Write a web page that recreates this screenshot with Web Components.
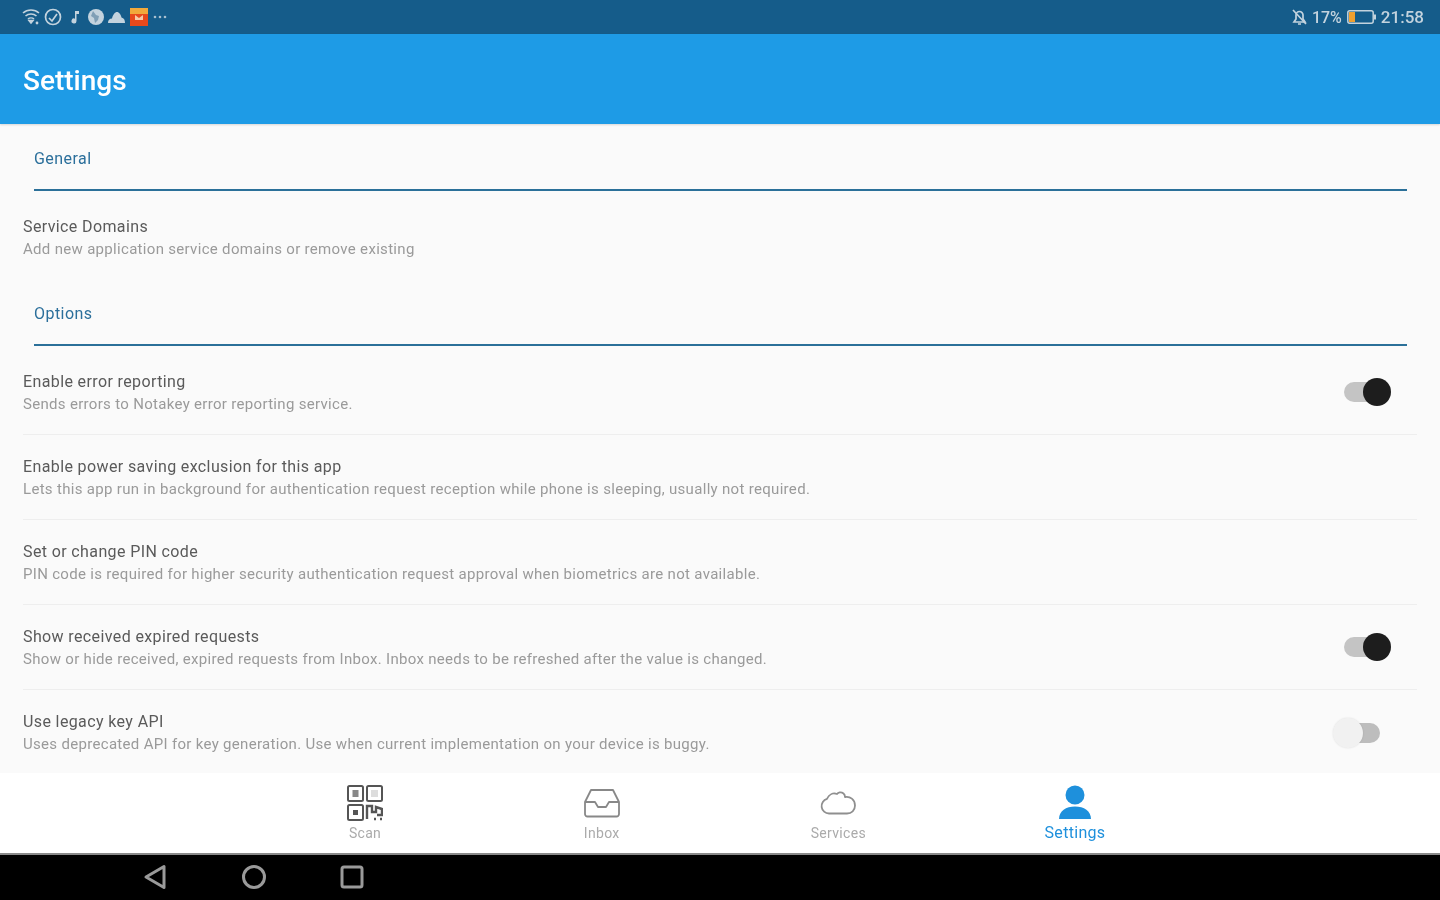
<!DOCTYPE html>
<html lang="en">
<head>
<meta charset="utf-8">
<title>Settings</title>
<style>
  html, body { margin: 0; height: 100%; overflow: hidden; }
  body { font-family: Roboto, "Liberation Sans", sans-serif; background: #fafafa; }
  settings-page { height: 100vh; }
</style>
</head>
<body>
<settings-page>
  <settings-section heading="General">
    <settings-row plain>
      <span slot="title">Service Domains</span>
      <span slot="subtitle">Add new application service domains or remove existing</span>
    </settings-row>
  </settings-section>
  <settings-section heading="Options">
    <settings-row>
      <span slot="title">Enable error reporting</span>
      <span slot="subtitle">Sends errors to Notakey error reporting service.</span>
      <toggle-switch checked></toggle-switch>
    </settings-row>
    <settings-row>
      <span slot="title">Enable power saving exclusion for this app</span>
      <span slot="subtitle">Lets this app run in background for authentication request reception while phone is sleeping, usually not required.</span>
    </settings-row>
    <settings-row>
      <span slot="title">Set or change PIN code</span>
      <span slot="subtitle">PIN code is required for higher security authentication request approval when biometrics are not available.</span>
    </settings-row>
    <settings-row>
      <span slot="title">Show received expired requests</span>
      <span slot="subtitle">Show or hide received, expired requests from Inbox. Inbox needs to be refreshed after the value is changed.</span>
      <toggle-switch checked></toggle-switch>
    </settings-row>
    <settings-row>
      <span slot="title">Use legacy key API</span>
      <span slot="subtitle">Uses deprecated API for key generation. Use when current implementation on your device is buggy.</span>
      <toggle-switch></toggle-switch>
    </settings-row>
  </settings-section>
</settings-page>

<script>
// Small helper so every component below is just a class with a template string
function defineComponent(name, html, extra = {}) {
  const template = document.createElement('template');
  template.innerHTML = html;
  class Component extends HTMLElement {
    connectedCallback() {
      if (this.shadowRoot) return;
      const root = this.attachShadow({ mode: 'open' });
      root.appendChild(template.content.cloneNode(true));
      if (extra.setup) extra.setup(this, root);
    }
  }
  customElements.define(name, Component);
}

/* Top status bar */
defineComponent('status-bar', `
  <style>
    :host { display: flex; height: 34px; flex: none; align-items: center; justify-content: space-between;
      background: #155c8a; padding: 0 16px 0 22px; color: #c3d3de; font-size: 16px; font-weight: 500; filter: blur(.6px); }
    .group { display: flex; align-items: center; }
    svg { display: block; }
    .left { gap: 4px; }
    .right { gap: 5px; }
  </style>
  <div class="group left">
    <svg width="18" height="18" viewBox="0 0 18 18" fill="none" stroke="#c3d3de" stroke-width="1.6">
      <path d="M1 5c4.500-4 11.500-4 16 0M3.500 8c3-2.700 8-2.700 11 0M6 11c1.600-1.400 4.400-1.400 6 0"/>
      <path d="M9 15l-2-2.500h4z" fill="#c3d3de"/><circle cx="15" cy="15" r="1.400" fill="#c3d3de" stroke="none"/>
    </svg>
    <svg width="18" height="18" viewBox="0 0 18 18" fill="none" stroke="#c3d3de" stroke-width="1.700">
      <circle cx="9" cy="9" r="7.500"/><path d="M5 10l3 3 5-7"/>
    </svg>
    <svg width="10" height="14" viewBox="0 0 10 14" fill="#c3d3de" style="margin:0 2px 0 4px">
      <path d="M5 1h4v3H6.500v7a2.500 2.500 0 1 1-1.500-2.300z"/>
    </svg>
    <svg width="16" height="16" viewBox="0 0 16 16" style="margin-left:2px">
      <circle cx="8" cy="8" r="8" fill="#c3d3de"/><path d="M5 2l3 4 3 1-1 4-3 3-1-5-3-2z" fill="#7f9fb6"/>
    </svg>
    <svg width="17" height="11" viewBox="0 0 17 11" fill="#c3d3de"><path d="M0 11c0-3 1.500-4.500 4-4.500C5 2.500 7 0 9 0s4 2.500 4.500 5.500C16 6 17 8 17 11z"/></svg>
    <svg width="18" height="18" viewBox="0 0 18 18" style="margin-left:1px">
      <rect width="18" height="18" fill="#e8491c"/><rect width="18" height="6" fill="#f2a93b"/>
      <path d="M5 7l4 3 4-3v5H5z" fill="#f7c9a8"/>
    </svg>
    <svg width="14" height="4" viewBox="0 0 14 4" fill="#a9c0cf" style="margin-left:1px">
      <circle cx="2" cy="2" r="1.300"/><circle cx="7" cy="2" r="1.300"/><circle cx="12" cy="2" r="1.300"/>
    </svg>
  </div>
  <div class="group right">
    <svg width="15" height="16" viewBox="0 0 15 16" fill="none" stroke="#c3d3de" stroke-width="1.700">
      <path d="M2 13h11l-2-3V6a3.500 3.500 0 0 0-7 0v4z"/><path d="M1 1l13 14M6 15h3"/>
    </svg>
    <span>17%</span>
    <svg width="30" height="14" viewBox="0 0 30 14">
      <rect x=".8" y=".8" width="25.400" height="12.400" rx="2" fill="none" stroke="#c3d3de" stroke-width="1.500"/>
      <rect x="2" y="2" width="6" height="10" fill="#f0a030"/><rect x="27" y="4.500" width="2" height="5" fill="#c3d3de"/>
    </svg>
    <span style="font-size:17px;margin-left:-1px">21:58</span>
  </div>
`);

/* Blue title bar */
defineComponent('app-bar', `
  <style>
    :host { display: flex; height: 90px; flex: none; align-items: center; box-sizing: border-box;
      padding: 3px 0 0 23px; background: #1e9be6; color: #fff; font-size: 28px; font-weight: 500;
      box-shadow: 0 1px 2px rgba(0,0,0,.15); position: relative; z-index: 1; }
    span { filter: blur(.6px); }
  </style>
  <span><slot></slot></span>
`);

/* Group heading with the rule below, rows are slotted */
defineComponent('settings-section', `
  <style>
    :host { display: block; }
    .head { height: 65px; margin: 0 33px 0 34px; border-bottom: 2px solid #2b7099; box-sizing: content-box;
      padding-top: 0; color: #2b6f9b; font-size: 16px; letter-spacing: .45px; line-height: 68px; }
    .head span { filter: blur(.6px); display: inline-block; line-height: 20px; vertical-align: middle; }
    .rows { padding-top: 4px; }
  </style>
  <div class="head"><span id="label"></span></div>
  <div class="rows"><slot></slot></div>
`, { setup(el, root) { root.getElementById('label').textContent = el.getAttribute('heading'); } });

/* One preference row: title, subtitle and an optional control */
defineComponent('settings-row', `
  <style>
    :host { display: flex; height: 85px; box-sizing: border-box; margin: 0 23px; align-items: center;
      justify-content: space-between; border-bottom: 1px solid #eeeeee; }
    :host([plain]) { height: 84px; border-bottom: none; }
    .text { display: flex; flex-direction: column; padding-top: 1px; filter: blur(.6px); }
    .title { color: #5a5a5a; font-size: 16px; line-height: 20px; letter-spacing: .38px; }
    .subtitle { color: #9a9a9a; font-size: 15px; line-height: 20px; margin-top: 2px; letter-spacing: .31px; }
  </style>
  <div class="text">
    <div class="title"><slot name="title"></slot></div>
    <div class="subtitle"><slot name="subtitle"></slot></div>
  </div>
  <slot></slot>
`);

/* Material style switch, on state has the dark knob */
defineComponent('toggle-switch', `
  <style>
    :host { display: block; position: relative; width: 47px; height: 30px; margin-right: 37px; margin-top: 2px; filter: blur(.6px); }
    :host([checked]) { margin-right: 26px; margin-top: 0; }
    .track { position: absolute; left: 12px; right: 0; top: 5px; height: 20px; border-radius: 10px; background: #bdbdbd; }
    .knob { position: absolute; left: 0; top: 0; width: 30px; height: 30px; border-radius: 50%; background: #f1f1f1; box-shadow: 0 0 2px rgba(0,0,0,.12); }
    :host([checked]) .track { left: 0; right: 12px; background: #c4c4c4; }
    :host([checked]) .knob { left: auto; right: 0; top: 1px; width: 28px; height: 28px; background: #1d1d1d; box-shadow: none; }
  </style>
  <div class="track"></div>
  <div class="knob"></div>
`);

/* Bottom tab with icon and label */
defineComponent('tab-item', `
  <style>
    :host { display: flex; flex-direction: column; align-items: center; color: #ababab; font-size: 14px; }
    :host([active]) { color: #1e90dc; font-size: 16px; }
    .icon { height: 40px; margin-top: 10px; display: flex; align-items: center; justify-content: center; }
    .label { line-height: 20px; letter-spacing: .3px; filter: blur(.6px); }
    ::slotted(svg) { display: block; filter: blur(.5px); }
  </style>
  <div class="icon"><slot name="icon"></slot></div>
  <div class="label"><slot></slot></div>
`);

defineComponent('tab-bar', `
  <style>
    :host { display: grid; height: 80px; flex: none; grid-template-columns: repeat(4, 236.670px); justify-content: center;
      background: #fff; position: relative; }
  </style>
  <slot></slot>
`);

/* Android soft keys */
defineComponent('nav-bar', `
  <style>
    :host { display: grid; height: 47px; flex: none; box-sizing: border-box; grid-template-columns: repeat(3, 98.500px);
      padding: 0 0 2px 106px; align-items: center; justify-items: center; background: #000; border-top: 2px solid #8a8a8a; filter: blur(.5px); }
    svg { display: block; }
  </style>
  <svg width="24" height="26" viewBox="0 0 24 26" fill="none" stroke="#9a9a9a" stroke-width="3" stroke-linejoin="round"><path d="M21 2.500v21L3 13z"/></svg>
  <svg width="26" height="26" viewBox="0 0 26 26" fill="none" stroke="#9a9a9a" stroke-width="3"><circle cx="13" cy="13" r="10.500"/></svg>
  <svg width="24" height="24" viewBox="0 0 24 24" fill="none" stroke="#9a9a9a" stroke-width="3"><rect x="2" y="2" width="20" height="20" rx="2"/></svg>
`);

defineComponent('settings-page', `
  <style>
    :host { display: flex; flex-direction: column; }
    main { flex: 1; min-height: 0; overflow: hidden; background: #fafafa; }
  </style>
  <status-bar></status-bar>
  <app-bar>Settings</app-bar>
  <main><slot></slot></main>
  <tab-bar>
    <tab-item>
      <svg slot="icon" width="36" height="36" viewBox="0 0 36 36" fill="none" stroke="#555" stroke-width="2">
        <rect x="1" y="1" width="15" height="15" rx="1.500"/><rect x="5.500" y="5" width="6" height="7" fill="#888" stroke="none"/>
        <rect x="20" y="1" width="15" height="15" rx="1.500"/><rect x="24" y="5" width="7" height="7" fill="#ddd" stroke="none"/>
        <rect x="1" y="20" width="15" height="15" rx="1.500"/><rect x="6" y="25" width="5" height="5" fill="#555" stroke="none"/>
        <path d="M20 34V21h5v6h4v-5l6 2v6h-5M27 34h2M33 34h2" stroke-width="2.400"/>
      </svg>
      Scan
    </tab-item>
    <tab-item>
      <svg slot="icon" width="36" height="30" viewBox="0 0 36 30" fill="none" stroke="#888" stroke-width="1.800" stroke-linejoin="round">
        <path d="M1 14L7 2h22l6 12v12a2.500 2.500 0 0 1-2.500 2.500h-29A2.500 2.500 0 0 1 1 26z"/>
        <path d="M1 14h10l3 5h8l3-5h10"/>
      </svg>
      Inbox
    </tab-item>
    <tab-item>
      <svg slot="icon" width="36" height="24" viewBox="0 0 36 24" fill="none" stroke="#8f8f8f" stroke-width="1.800" stroke-linejoin="round">
        <path d="M9 22.500a7.500 7.500 0 0 1-2-14.700C9 3.500 13 1.500 17 3c1-1.500 4-2.500 6.500-.5 1 .8 1.500 2 1.500 3.500 5-1 10 2.500 10 8.500 0 5-3.500 8-8 8z"/>
      </svg>
      Services
    </tab-item>
    <tab-item active>
      <svg slot="icon" width="34" height="36" viewBox="0 0 34 36" fill="#1e90dc">
        <circle cx="17" cy="10" r="9.500"/><path d="M1 34c0-8 7-12.500 16-12.500S33 26 33 34z"/>
      </svg>
      Settings
    </tab-item>
  </tab-bar>
  <nav-bar></nav-bar>
`);
</script>
</body>
</html>
